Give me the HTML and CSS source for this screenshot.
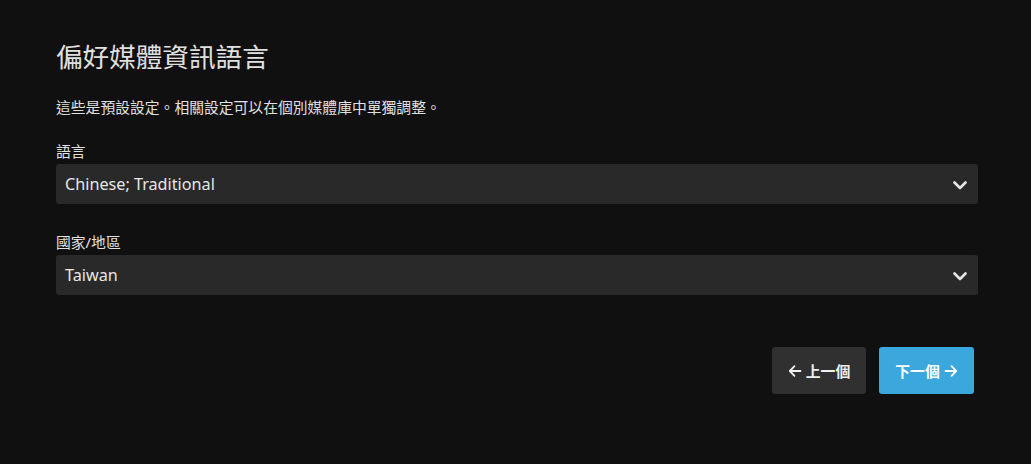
FILE: index.html
```html
<!DOCTYPE html>
<html lang="zh-Hant">
<head>
<meta charset="utf-8">
<link rel="stylesheet" href="styles.css">
</head>
<body>
<div class="page">
  <h1 class="title">偏好媒體資訊語言</h1>
  <p class="desc">這些是預設設定。相關設定可以在個別媒體庫中單獨調整。</p>
  <div class="field">
    <label class="label">語言</label>
    <div class="select">
      <span class="value">Chinese; Traditional</span>
      <svg class="chev" width="14" height="9" viewBox="0 0 14 9"><path d="M1.5 1.5 L7 7 L12.5 1.5" fill="none" stroke="#e6e6e6" stroke-width="2.6" stroke-linecap="round" stroke-linejoin="round"/></svg>
    </div>
  </div>
  <div class="field field2">
    <label class="label">國家/地區</label>
    <div class="select">
      <span class="value">Taiwan</span>
      <svg class="chev" width="14" height="9" viewBox="0 0 14 9"><path d="M1.5 1.5 L7 7 L12.5 1.5" fill="none" stroke="#e6e6e6" stroke-width="2.6" stroke-linecap="round" stroke-linejoin="round"/></svg>
    </div>
  </div>
  <div class="actions">
    <button class="btn btn-prev">
      <svg class="arr" width="14" height="14" viewBox="0 0 14 14"><path d="M12.5 7 H2 M6.5 2.2 L1.8 7 L6.5 11.8" fill="none" stroke="#f0f0f0" stroke-width="1.8" stroke-linecap="round" stroke-linejoin="round"/></svg>
      <span>上一個</span>
    </button>
    <button class="btn btn-next">
      <span>下一個</span>
      <svg class="arr" width="14" height="14" viewBox="0 0 14 14"><path d="M1.5 7 H12 M7.5 2.2 L12.2 7 L7.5 11.8" fill="none" stroke="#ffffff" stroke-width="1.8" stroke-linecap="round" stroke-linejoin="round"/></svg>
    </button>
  </div>
</div>
</body>
</html>
```

FILE: styles.css
```css
html, body {
  margin: 0;
  padding: 0;
  background: #101010;
}
body {
  font-family: "Noto Sans", "Noto Sans CJK TC", sans-serif;
  color: rgba(255, 255, 255, 0.87);
  font-size: 14.8px;
}
.page {
  padding: 41px 53px 0 56px;
}
.title {
  margin: 0;
  font-size: 26.6px;
  line-height: 32px;
  font-weight: 400;
  color: #e0e0e0;
}
.desc {
  margin: 24px 0 0 0;
  line-height: 20px;
  color: #e0e0e0;
}
.field {
  margin-top: 24px;
}
.field2 {
  margin-top: 28px;
}
.label {
  display: block;
  line-height: 20px;
  margin-bottom: 3px;
  color: #e0e0e0;
}
.select {
  height: 40px;
  background: #292929;
  border-radius: 3px;
  display: flex;
  align-items: center;
  justify-content: space-between;
  padding: 0 10px 0 9px;
}
.value {
  font-size: 16.2px;
  color: #e6e6e6;
}
.chev {
  margin-right: 1px;
  margin-top: 2px;
}
.actions {
  display: flex;
  justify-content: flex-end;
  gap: 13px;
  margin-top: 52px;
  padding-right: 4px;
}
.btn {
  height: 47px;
  border: none;
  border-radius: 3px;
  font-family: inherit;
  font-size: 14.8px;
  font-weight: 700;
  display: flex;
  align-items: center;
  gap: 4px;
  padding: 0;
  justify-content: center;
}
.btn-prev {
  width: 94px;
  background: #303030;
  color: #f0f0f0;
}
.btn-next {
  width: 95px;
  background: #3aa7dd;
  color: #ffffff;
}
```
